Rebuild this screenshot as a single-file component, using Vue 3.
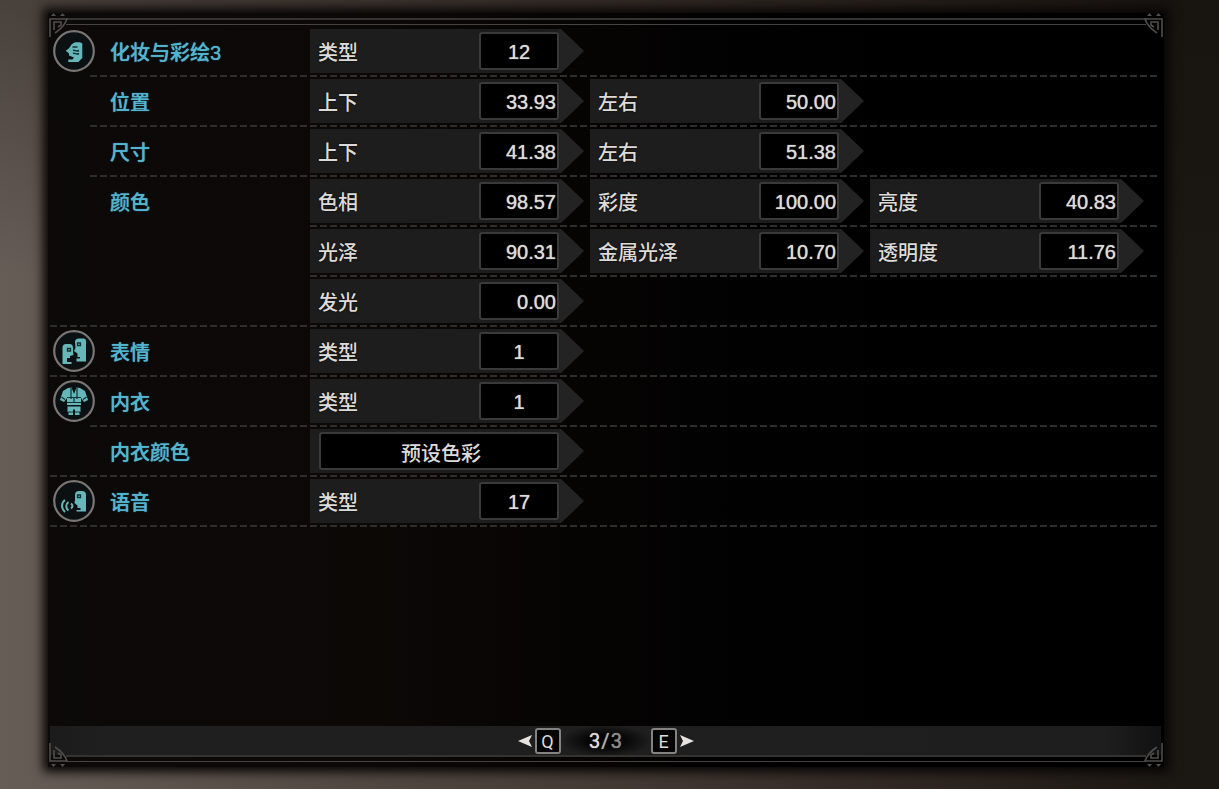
<script setup>
const num = (label, value) => ({ label, value, align: 'right' })
const type = (value) => ({ label: '类型', value, align: 'center' })

const rows = [
  { title: '化妆与彩绘3', icon: 'paint', line: 'label', cells: [type('12')] },
  { title: '位置', line: 'label', cells: [num('上下', '33.93'), num('左右', '50.00')] },
  { title: '尺寸', line: 'label', cells: [num('上下', '41.38'), num('左右', '51.38')] },
  { title: '颜色', line: 'cells', cells: [num('色相', '98.57'), num('彩度', '100.00'), num('亮度', '40.83')] },
  { title: '', line: 'cells', cells: [num('光泽', '90.31'), num('金属光泽', '10.70'), num('透明度', '11.76')] },
  { title: '', line: 'full', cells: [num('发光', '0.00')] },
  { title: '表情', icon: 'face', line: 'full', cells: [type('1')] },
  { title: '内衣', icon: 'wear', line: 'label', cells: [type('1')] },
  { title: '内衣颜色', line: 'full', cells: [{ preset: '预设色彩' }] },
  { title: '语音', icon: 'voice', line: 'full', cells: [type('17')] },
]
const corners = ['tl', 'tr', 'bl', 'br']
</script>

<template>
  <main class="stage">
    <section class="panel">
      <i class="rule rule-top"></i>
      <i class="rule rule-bottom"></i>
      <svg v-for="c in corners" :key="c" class="corner" :class="c" viewBox="0 0 20 24" aria-hidden="true">
        <path d="M2 24V6H19C17 12 13 16 7 20M6 17V9H13V12L10 14" fill="none" stroke="currentColor" stroke-width="1.6" />
        <path d="M3 3L5.500 0L8 3ZM12 3L14.500 0L17 3Z" fill="currentColor" />
      </svg>

      <div class="list">
        <div v-for="(row, r) in rows" :key="r" class="row" :class="row.line">
          <div class="slot">
            <svg v-if="row.icon" class="icon" viewBox="0 0 42 42" aria-hidden="true">
              <circle cx="21" cy="21" r="19.8" fill="#0b1012" stroke="#7a7674" stroke-width="2.2" />
              <g v-if="row.icon === 'paint'">
                <path fill="#65b7b9" d="M18.700 14.300L22 12.300H27L29.300 13.500V28L25.300 32H15.300V29.500H19.500L21 27.500L16 25.500V23.500L12.700 20.700L16 18.300Z" />
                <path fill="none" stroke="#123034" stroke-width="1.400" d="M19.500 17H24.500M20 20.500C22 19.500 22.500 22 26 20.500M20 23.500C22 22.500 23 25 26 23.500" />
              </g>
              <g v-else-if="row.icon === 'face'">
                <path fill="#65b7b9" d="M9.500 34V17Q10 14 13 14H16.500Q20 14 20 18V22L20.500 25L17 26V28H14V32H18.500V34Z" />
                <path fill="#65b7b9" d="M22 12Q22 8.500 26 8.500H31Q33 8.500 33 11V31.500H23.500V28.500H27V27H24.500V23.500L21 21L22.500 18Z" />
                <path fill="#65b7b9" stroke="#123034" stroke-width="1.300" d="M14.500 18.500H17.500V21H14.500ZM24.500 13H27.500V15.500H24.500Z" />
              </g>
              <g v-else-if="row.icon === 'wear'">
                <path fill="#65b7b9" d="M15 8L18.500 7.500L21 14L23.500 7.500L27 8L32 11L35 20L31 22L28 18V25H14V18L11 22L7 20L10 11Z" />
                <path fill="#65b7b9" d="M14.500 26.500H27.500V32H26.500V35H22V29.500H20V35H15.500V32H14.500Z" />
                <path fill="none" stroke="#123034" stroke-width="1.200" d="M18 8V19M24 8V19M14 17.500H28M21 18V22M14 22.500H28M8.500 17L12 19.500M33.500 17L30 19.500M15 32H20M22 32H27" />
              </g>
              <g v-else>
                <path fill="#65b7b9" d="M22 15Q22 11 26 11H29Q33 11 33 15V31.500H23.500V30H27.500V28H24.500V25.500L21.500 23L22 20Z" />
                <path fill="#65b7b9" stroke="#123034" stroke-width="1.300" d="M24.500 15H27.500V17.500H24.500Z" />
                <path fill="none" stroke="#65b7b9" stroke-width="2" d="M12 20C8 23 8 28 12 32M15.500 22C12.500 24 12.500 28 15.500 30.500M18 23.500C20 25 20 27 18 28.500" />
              </g>
            </svg>
          </div>
          <h2 class="title">{{ row.title }}</h2>
          <div v-for="(cell, i) in row.cells" :key="i" class="cell">
            <button v-if="cell.preset" type="button" class="box preset">{{ cell.preset }}</button>
            <template v-else>
              <label class="name" :for="`v-${r}-${i}`">{{ cell.label }}</label>
              <input :id="`v-${r}-${i}`" class="box value" :class="cell.align" type="text" readonly :value="cell.value" />
            </template>
          </div>
        </div>
      </div>

      <nav class="pager">
        <button type="button" class="turn">
          <svg class="arrow" viewBox="0 0 14 12" aria-hidden="true"><path d="M0 6L14 0L11 6L14 12Z" fill="#e6e4e2" /></svg>
          <kbd class="key">Q</kbd>
        </button>
        <span class="count">3<span class="slash">/</span><span class="total">3</span></span>
        <button type="button" class="turn">
          <kbd class="key">E</kbd>
          <svg class="arrow" viewBox="0 0 14 12" aria-hidden="true"><path d="M14 6L0 0L3 6L0 12Z" fill="#e6e4e2" /></svg>
        </button>
      </nav>
    </section>
  </main>
</template>

<style>
body {
  margin: 0;
  background: #1b1713;
}
</style>

<style scoped>
.stage {
  box-sizing: border-box;
  display: flex;
  min-height: 100vh;
  padding: 13px 55px 22px 48px;
  background:
    linear-gradient(180deg, rgba(18, 13, 10, 0.35), transparent 35%),
    linear-gradient(90deg, #665d57 0%, #594f49 20%, #433a34 50%, #2b231e 80%, #1b1713 97%);
  font-family: "Liberation Sans", "Noto Sans CJK SC", sans-serif;
  font-size: 20px;
  color: #dddbd9;
}
.panel {
  position: relative;
  flex: 1;
  display: flex;
  flex-direction: column;
  padding: 14px 6px 12px 2px;
  background: linear-gradient(90deg, #0c0a08 0%, #0b0806 30%, #030202 58%, #000 75%);
  box-shadow: 0 0 10px 5px #080605;
}
.rule {
  position: absolute;
  left: 18px;
  right: 18px;
  height: 4px;
  border-top: 2px solid #353331;
  border-bottom: 1px solid #454341;
}
.rule-top { top: 5px; }
.rule-bottom { bottom: 5px; }
.corner {
  position: absolute;
  width: 20px;
  height: 24px;
  color: #504e4c;
}
.tl { left: 0; top: 0; }
.tr { right: 0; top: 0; transform: scaleX(-1); }
.bl { left: 0; bottom: 0; transform: scaleY(-1); }
.br { right: 0; bottom: 0; transform: scale(-1); }

.list { flex: 1; }
.row {
  --from: 0px;
  display: grid;
  grid-template-columns: 60px 200px repeat(3, minmax(0, 280px));
  height: 50px;
  background: repeating-linear-gradient(90deg, #302e2c 0 7px, transparent 7px 10px) var(--from) bottom / 100% 2px no-repeat;
}
.row.label { --from: 40px; }
.row.cells { --from: 260px; }
.slot { padding: 3px; }
.icon {
  display: block;
  width: 42px;
  height: 42px;
}
.title {
  margin: 0;
  font-size: 20px;
  font-weight: 500;
  line-height: 52px;
  color: #53b4d0;
  text-shadow: 0 0 1px #53b4d0;
}
.cell {
  box-sizing: border-box;
  display: flex;
  align-items: center;
  justify-content: flex-end;
  height: 44px;
  margin: 2px 6px 0 0;
  padding: 0 25px 0 8px;
  background: linear-gradient(90deg, #1e1d1d calc(100% - 26px), #242323 calc(100% - 24px));
  clip-path: polygon(0 0, calc(100% - 23px) 0, 100% 50%, calc(100% - 23px) 100%, 0 100%);
}
.name {
  flex: 1;
  font-weight: 500;
  text-shadow: 0 0 2px #000;
}
.box {
  box-sizing: border-box;
  height: 38px;
  padding: 2px 1px 0;
  border: 2px solid #3b3a3a;
  border-radius: 3px;
  background: #000;
  color: inherit;
  font: inherit;
  text-shadow: 0 0 1px #dddbd9;
}
.value {
  width: 80px;
}
.right { text-align: right; }
.center { text-align: center; }
.preset {
  width: 240px;
  padding-left: 5px;
  font-weight: 500;
  text-shadow: none;
}

.pager {
  display: flex;
  justify-content: center;
  align-items: center;
  height: 29px;
  margin-right: -3px;
  background: linear-gradient(90deg, #1c1b1b, #201f1f 5%, #1f1e1e 95%, #121111);
}
.turn {
  display: flex;
  align-items: center;
  gap: 3px;
  padding: 0;
  border: 0;
  background: none;
  color: inherit;
}
.arrow {
  width: 14px;
  height: 12px;
}
.key {
  box-sizing: border-box;
  width: 26px;
  height: 26px;
  border: 2px solid #858382;
  border-radius: 3px;
  background: #050505;
  font: 18px/23px Roboto, sans-serif;
  text-align: center;
}
.count {
  width: 90px;
  font: 20px/32px Roboto, sans-serif;
  text-align: center;
  text-shadow: 0 0 1px currentColor;
  background: radial-gradient(closest-side, #060606 40%, transparent);
}
.slash { padding: 0 1px; color: #b3b1af; }
.total { color: #8f8d8c; }
</style>
